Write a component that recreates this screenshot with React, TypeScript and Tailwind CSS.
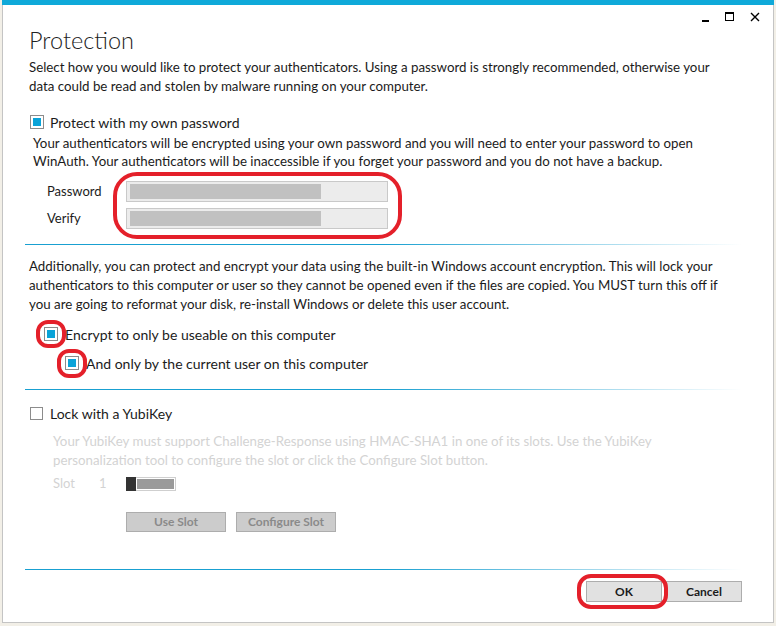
import React from "react"

const font = { fontFamily: "Lato, 'Open Sans', sans-serif" }

function Check({ checked }: { checked: boolean }) {
  return (
    <span className="flex h-[14px] w-[14px] shrink-0 items-center justify-center border border-[#8c8c8c] bg-white">
      {checked && <span className="h-[8px] w-[8px] bg-[#0aa3d8]" />}
    </span>
  )
}

function Ring({ className }: { className: string }) {
  // red annotation drawn over the screenshot
  return <span className={`pointer-events-none absolute border-[4px] border-[#e4202a] ${className}`} />
}

function Separator() {
  return <div className="h-px bg-linear-to-r from-[#19a0d1] from-50% to-[#19a0d1]/0" />
}

function PwField() {
  return (
    <div className="flex h-[21px] w-[262px] items-center border border-[#c9c9c9] bg-[#ececec] px-[3px]">
      <div className="h-[15px] w-[191px] bg-[#c1c1c1]" />
    </div>
  )
}

export default function App() {
  return (
    <div className="h-[626px] w-[776px] bg-[#f2efe7] pl-[2px] text-[#1b1b1b]" style={font}>
      <div className="flex h-[623px] w-[772px] flex-col border-x border-b border-[#c4c4c4] bg-white">
        <div className="-mx-px h-[5px] bg-[#0fa9d9]" />

        {/* caption buttons */}
        <div className="flex h-[20px] items-start justify-end gap-[16px] pr-[12px] pt-[7px]">
          <span className="mt-[8px] h-[2px] w-[7px] bg-black" />
          <span className="h-[9px] w-[9px] border border-t-2 border-black" />
          <svg width="10" height="10" viewBox="0 0 10 10" className="mr-[1px]">
            <path d="M1 1 L9 9 M9 1 L1 9" stroke="black" strokeWidth="1.4" />
          </svg>
        </div>

        <div className="flex flex-1 flex-col pl-[22px] pr-[31px]">
          <h1 className="ml-[4px] h-[30px] text-[23.5px] font-light leading-[30px] text-[#222]">
            Protection
          </h1>
          <p className="ml-[4px] mt-[3px] whitespace-nowrap text-[13.3px] leading-[19px]">
            Select how you would like to protect your authenticators. Using a password is strongly recommended, otherwise your
            <br />
            data could be read and stolen by malware running on your computer.
          </p>

          <label className="ml-[5px] mt-[16px] flex h-[20px] items-center gap-[6px] text-[14px]">
            <Check checked />
            Protect with my own password
          </label>
          <p className="ml-[8px] mt-[2px] whitespace-nowrap text-[13.3px] leading-[18px]">
            Your authenticators will be encrypted using your own password and you will need to enter your password to open
            <br />
            WinAuth. Your authenticators will be inaccessible if you forget your password and you do not have a backup.
          </p>

          <div className="ml-[22px] mt-[11px] flex">
            <div className="flex w-[79px] flex-col gap-[6px] text-[13px]">
              <span className="flex h-[21px] items-center">Password</span>
              <span className="flex h-[21px] items-center">Verify</span>
            </div>
            <div className="relative flex flex-col gap-[6px]">
              <PwField />
              <PwField />
              <Ring className="-bottom-[10px] -left-[13px] -right-[14px] -top-[9px] rounded-[24px]" />
            </div>
          </div>

          <div className="mt-[15px]">
            <Separator />
          </div>

          <p className="ml-[4px] mt-[12px] whitespace-nowrap text-[13.3px] leading-[19px]">
            Additionally, you can protect and encrypt your data using the built-in Windows account encryption. This will lock your
            <br />
            authenticators to this computer or user so they cannot be opened even if the files are copied. You MUST turn this off if
            <br />
            you are going to reformat your disk, re-install Windows or delete this user account.
          </p>

          <label className="ml-[19px] mt-[10px] flex h-[20px] items-center gap-[7px] text-[14px]">
            <span className="relative">
              <Check checked />
              <Ring className="-left-[8px] -top-[7px] h-[28px] w-[30px] rounded-[12px]" />
            </span>
            Encrypt to only be useable on this computer
          </label>
          <label className="ml-[40px] mt-[9px] flex h-[20px] items-center gap-[7px] text-[14px]">
            <span className="relative">
              <Check checked />
              <Ring className="-left-[8px] -top-[7px] h-[29px] w-[30px] rounded-[12px]" />
            </span>
            And only by the current user on this computer
          </label>

          <div className="mt-[16px]">
            <Separator />
          </div>

          <label className="ml-[5px] mt-[13px] flex h-[20px] items-center gap-[7px] text-[14px]">
            <span className="h-[13px] w-[13px] border border-[#8c8c8c] bg-white" />
            Lock with a YubiKey
          </label>
          <p className="ml-[28px] mt-[9px] whitespace-nowrap text-[13.3px] leading-[19px] text-[#d3d3d3]">
            Your YubiKey must support Challenge-Response using HMAC-SHA1 in one of its slots. Use the YubiKey
            <br />
            personalization tool to configure the slot or click the Configure Slot button.
          </p>
          <div className="ml-[28px] mt-[4px] flex h-[20px] items-center text-[13px] text-[#d3d3d3]">
            <span className="w-[46px]">Slot</span>
            <span className="w-[27px]">1</span>
            <div className="flex h-[14px] w-[50px] border border-[#cfcfcf] bg-white">
              <span className="-my-px -ml-px w-[10px] bg-[#333]" />
              <span className="m-px flex-1 bg-[#9a9a9a]" />
            </div>
          </div>
          <div className="ml-[101px] mt-[18px] flex gap-[10px] text-[12px] font-bold text-[#8a8a8a]">
            <button className="h-[20px] w-[100px] border border-[#adadad] bg-[#cccccc]">Use Slot</button>
            <button className="h-[20px] w-[100px] border border-[#adadad] bg-[#cccccc]">Configure Slot</button>
          </div>

          <div className="mt-auto">
            <Separator />
          </div>
          <div className="mb-[20px] mt-[11px] flex justify-end gap-[4px] text-[12px] font-bold">
            <span className="relative">
              <button className="h-[21px] w-[76px] border border-[#adadad] bg-[#e1e1e1]">OK</button>
              <Ring className="-bottom-[7px] -left-[9px] -right-[6px] -top-[7px] rounded-[14px]" />
            </span>
            <button className="h-[21px] w-[76px] border border-[#adadad] bg-[#e1e1e1]">Cancel</button>
          </div>
        </div>
      </div>
    </div>
  )
}
